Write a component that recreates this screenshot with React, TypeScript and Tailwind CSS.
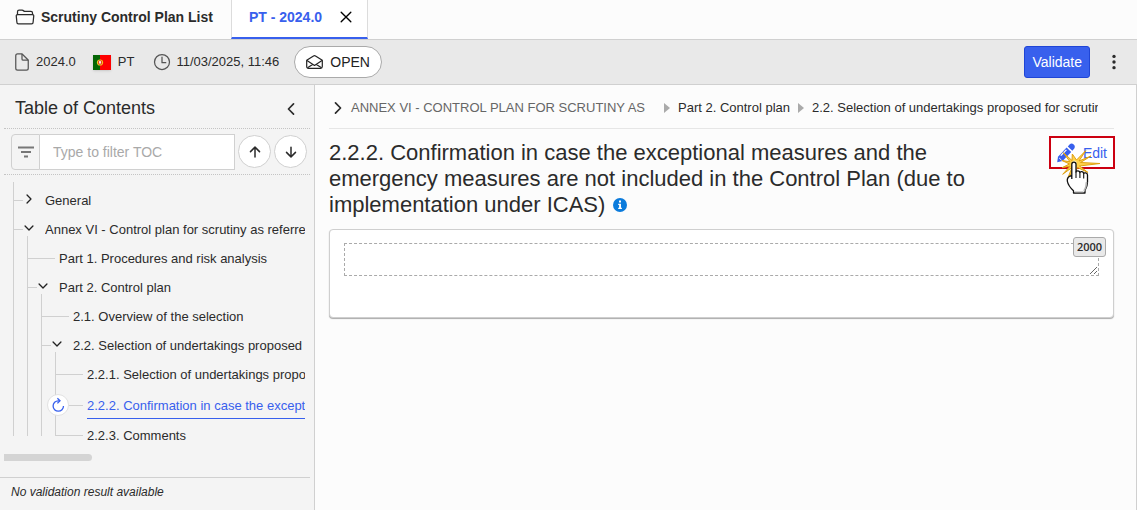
import React from "react";
import {
  IoArrowDown,
  IoArrowUp,
  IoChevronBack,
  IoChevronDown,
  IoChevronForward,
  IoCloseOutline,
  IoDocumentOutline,
  IoEllipsisVertical,
  IoFolderOpenOutline,
  IoTimeOutline,
} from "react-icons/io5";

type TocItem = {
  label: string;
  depth: number;
  state?: "open" | "closed";
  selected?: boolean;
};

const items: TocItem[] = [
  { label: "General", depth: 0, state: "closed" },
  { label: "Annex VI - Control plan for scrutiny as referre", depth: 0, state: "open" },
  { label: "Part 1. Procedures and risk analysis", depth: 1 },
  { label: "Part 2. Control plan", depth: 1, state: "open" },
  { label: "2.1. Overview of the selection", depth: 2 },
  { label: "2.2. Selection of undertakings proposed", depth: 2, state: "open" },
  { label: "2.2.1. Selection of undertakings propo", depth: 3 },
  { label: "2.2.2. Confirmation in case the except", depth: 3, selected: true },
  { label: "2.2.3. Comments", depth: 3 },
];

function ReloadIcon() {
  return (
    <svg viewBox="0 0 16 16" className="size-4" fill="none" stroke="currentColor" strokeWidth="1.3" aria-hidden="true">
      <path d="M9.800 3.800H8.300A5.200 5.200 0 1 0 13.500 9" />
      <path d="M7.400 1.300l2.600 2.500-2.600 2.600" />
    </svg>
  );
}

function OpenMailIcon() {
  return (
    <svg viewBox="0 0 17 14" className="h-[14px] w-[17px]" fill="none" stroke="currentColor" strokeWidth="1.2" strokeLinejoin="round" aria-hidden="true">
      <path d="M.7 5.300L7.500 1q1-.6 2 0l6.800 4.300v6.200q0 1.800-1.800 1.800h-12Q.7 13.300.7 11.500z" />
      <path d="M1 5.500l7.500 5 7.500-5M1.500 12.800L7 9.300M15.500 12.800L10 9.300" />
    </svg>
  );
}

function FlagPortugal() {
  return (
    <svg viewBox="0 0 18 15" className="h-[15px] w-[18px] shadow-sm" aria-hidden="true">
      <rect width="18" height="15" fill="#fe0000" />
      <rect width="7" height="15" fill="#056605" />
      <circle cx="7" cy="7.5" r="3.1" fill="#f0d020" />
      <rect x="5.200" y="5.400" width="3.600" height="4.200" rx="1" fill="#e02020" />
      <rect x="6.100" y="6.100" width="1.800" height="2.600" rx="0.6" fill="#fff" />
    </svg>
  );
}

function PencilIcon() {
  return (
    <svg viewBox="0 0 20 20" className="size-5" aria-hidden="true">
      <path d="M1.200 19.300l.8-5.500 8.600-9.200 4.600 4.500-8.600 8.900z" fill="#3860ed" />
      <path d="M11.800 3.400l2-2.200q2-1.400 3.900.4t.6 3.900l-2 2.300z" fill="#3860ed" />
      <path d="M4.800 12.600l5.600-5.700" stroke="#fff" strokeWidth="1.300" />
      <path d="M3.200 15l2.300 2.200" stroke="#fff" strokeWidth="1" />
    </svg>
  );
}

function ClickPointer() {
  return (
    <svg viewBox="0 0 42 46" className="pointer-events-none absolute top-[14px] left-[11px] h-[46px] w-[42px]" aria-hidden="true">
      <path
        d="M12 10.500L3.300 2.700l6.700 9.100-8-1.300 7.500 3.500L2 17.700l8-1.500-7.300 8.100 9.300-6.800-4.700 11.800 7.700-11.300 1 3 1.500-3.500 10.500 5-8.500-6.500 20.500-2.500-19.500-1L31 6l-12 5 6.700-10.300-9.200 9.300L12.300 4z"
        fill="#ffd24a"
        stroke="#dfa012"
        strokeWidth="1"
      />
      <circle cx="14.500" cy="12.800" r="2.200" fill="#fff3b8" />
      <path
        d="M11.800 29V14.200c0-2.900 4.200-2.900 4.200 0V22c.3-1.800 3.900-1.600 3.900.7.400-1.600 3.700-1.300 3.800.9.500-1.300 3.800-.8 3.800 1.400v7c0 4-1 6-2.500 8.500V43H13.500v-2.200C10.500 38 8 35 7.300 31c-.3-3 .7-4.700 4.500-5.600"
        fill="#fff"
        stroke="#111"
        strokeWidth="1.300"
        strokeLinejoin="round"
      />
      <path d="M16 21.500V28M19.900 22.500V28M23.700 23.500V28.500" stroke="#111" strokeWidth="1.100" />
      <path d="M24 41c1.600-2.500 2.400-4.500 2.500-9" stroke="#b5b5b5" strokeWidth="1.600" fill="none" />
      <path d="M14.500 41.800h9" stroke="#c9c9c9" strokeWidth="1.200" />
    </svg>
  );
}

function TocRow({ item, last }: { item: TocItem; last: boolean }) {
  const line = "border-l border-[#d0d0d0]";
  const guide = last ? "h-1/2 self-start" : "self-stretch";
  return (
    <li className={item.selected ? "relative flex h-8 items-center" : "relative flex h-[29px] items-center"}>
      {Array.from({ length: item.depth }, (_, i) => (
        <span key={i} className={`${line} ${guide} w-[14px] shrink-0`} />
      ))}
      <span className={`${line} ${guide} w-[14px] shrink-0`}>
        <span className={`flex flex-col justify-center ${last ? "h-[200%]" : "h-full"}`}>
          <span className={`h-px bg-[#d0d0d0] ${item.state ? "w-[9px]" : "w-full"}`} />
        </span>
      </span>
      <span className="flex w-[14px] shrink-0 flex-col justify-center self-stretch">
        {item.state ? (
          <button type="button" aria-label={`Toggle ${item.label}`} className="-ml-[5px] flex h-full items-center pb-1 text-[#222]">
            {item.state === "open" ? <IoChevronDown className="size-[14px]" /> : <IoChevronForward className="size-[14px]" />}
          </button>
        ) : (
          <span className="h-px bg-[#d0d0d0]" />
        )}
        {item.state === "open" && <span className={`${line} -mt-2 h-2 shrink-0`} />}
      </span>
      {item.selected && (
        <span className="absolute left-[34px] flex size-[22px] items-center justify-center rounded-full border border-[#e2e2e2] bg-white text-[#3860ed]">
          <ReloadIcon />
        </span>
      )}
      <a
        href="#section"
        className={
          item.selected
            ? "ml-1 flex-1 overflow-hidden border-b border-[#3860ed] pt-1.5 pb-1 leading-4 whitespace-nowrap text-[#3860ed]"
            : "ml-1 flex-1 overflow-hidden leading-5 whitespace-nowrap"
        }
      >
        {item.label}
      </a>
    </li>
  );
}

function Sidebar() {
  return (
    <aside className="flex w-[315px] shrink-0 flex-col border-r border-[#d0d0d0] bg-[#f4f4f4]">
      <div className="mr-1 ml-1 flex h-11 items-center justify-between border-b border-dotted border-[#c4c4c4] pr-[10px] pl-[11px]">
        <h2 className="pt-0.5 text-lg">Table of Contents</h2>
        <button type="button" aria-label="Collapse table of contents" className="pt-1">
          <IoChevronBack className="size-[18px]" />
        </button>
      </div>
      <div className="mx-1 flex h-[46px] items-center border-b border-dotted border-[#c4c4c4] pr-[3px] pl-[7px]">
        <label htmlFor="toc-filter" aria-label="Filter" className="flex h-9 w-[29px] items-center justify-center rounded-l border border-[#d0d0d0]">
          <svg viewBox="0 0 16 12" className="h-3 w-4" stroke="#777" strokeWidth="1.800" aria-hidden="true">
            <path d="M0 1.500h16M3 6h10M6 10.500h4" />
          </svg>
        </label>
        <input
          id="toc-filter"
          type="text"
          placeholder="Type to filter TOC"
          className="h-9 min-w-0 flex-1 border border-l-0 border-[#d0d0d0] bg-white px-[13px] text-sm placeholder:text-[#a9a9a9]"
        />
        <button type="button" aria-label="Previous" className="ml-[3px] flex size-[33px] items-center justify-center rounded-full border border-[#d0d0d0] bg-white">
          <IoArrowUp className="size-4" />
        </button>
        <button type="button" aria-label="Next" className="ml-[3px] flex size-[33px] items-center justify-center rounded-full border border-[#d0d0d0] bg-white">
          <IoArrowDown className="size-4" />
        </button>
      </div>
      <nav aria-label="Table of contents" className="mt-[7px] pr-[9px] pl-[13px] text-[13px]">
        <div className="h-1 border-l border-[#d0d0d0]" />
        <ul>
          {items.map((item, i) => (
            <TocRow key={item.label} item={item} last={i === items.length - 1} />
          ))}
        </ul>
      </nav>
      <div className="mt-1 ml-1 h-[7px] w-[88px] rounded-r-full bg-[#d4d4d4]" />
      <div className="mt-4 mr-1 flex-1 border-t border-[#d0d0d0] px-[11px] pt-1.5 text-xs leading-4 italic">
        No validation result available
      </div>
    </aside>
  );
}

function Content() {
  return (
    <main className="min-w-0 flex-1 border-r border-[#d0d0d0] pr-[22px] pl-[14px]">
      <nav aria-label="Breadcrumb" className="flex h-11 items-center border-b border-[#e6e6e6] pt-0.5 pr-4 text-[13px] whitespace-nowrap">
        <IoChevronForward className="mr-1 size-[18px] shrink-0" />
        <a href="#annex" className="w-[305px] shrink-0 text-[#666]">
          ANNEX VI - CONTROL PLAN FOR SCRUTINY AS
        </a>
        <span className="mr-2 ml-2 border-y-[5px] border-l-[6px] border-y-transparent border-l-[#aaa]" />
        <a href="#part2">Part 2. Control plan</a>
        <span className="mr-2 ml-2 border-y-[5px] border-l-[6px] border-y-transparent border-l-[#aaa]" />
        <a href="#selection" className="min-w-0 flex-1 overflow-hidden">
          2.2. Selection of undertakings proposed for scrutin
        </a>
      </nav>
      <div className="flex items-start justify-between">
        <h1 className="mt-[11px] max-w-[640px] text-[22px] leading-[26px]">
          2.2.2. Confirmation in case the exceptional measures and the emergency measures are not included in the Control Plan
          (due to implementation under ICAS)
          <svg viewBox="0 0 14 14" className="ml-2 inline size-[14px] align-baseline" aria-label="Information">
            <circle cx="7" cy="7" r="7" fill="#0b7bdc" />
            <path d="M6 2.500h2v2H6zM5.200 5.700H8v4h.9V11H5.200V9.700h.9V7h-.9z" fill="#fff" />
          </svg>
        </h1>
        <div className="relative -mr-px mt-[7px]">
          <button type="button" className="flex h-[33px] w-[66px] items-center justify-between border-2 border-[#cc0011] bg-white pr-1.5 pl-[5px] text-sm text-[#3860ed]">
            <PencilIcon />
            Edit
          </button>
          <ClickPointer />
        </div>
      </div>
      <section className="relative mt-[11px] h-[89px] rounded border border-[#cfcfcf] bg-white px-[14px] pt-[13px] pb-10 shadow-[0_1px_1px_#aaa]">
        <textarea
          aria-label="Confirmation text"
          className="block h-[33px] w-full resize border border-dashed border-[#aaa] bg-white pr-1"
        />
        <span className="absolute top-[7px] right-[7px] flex h-5 w-[33px] items-center justify-center rounded-[3px] border border-[#aaa] bg-[#e9e9e9] font-['Open_Sans',sans-serif] text-[11px] font-semibold">
          2000
        </span>
      </section>
    </main>
  );
}

export default function App() {
  return (
    <div className="flex min-h-screen flex-col bg-[#fcfcfc] font-['Liberation_Sans',Arial,sans-serif] text-[#2b2b2b]">
      <header className="flex h-10 border-b border-[#d0d0d0] text-sm font-bold">
        <a href="#list" className="flex items-center pr-[18px] pb-[5px] pl-[15px]">
          <IoFolderOpenOutline className="mr-1.5 size-5" />
          Scrutiny Control Plan List
        </a>
        <div className="flex items-center border-x border-b-2 border-x-[#dcdcdc] border-b-[#3860ed] bg-white pr-[10px] pb-[3px] pl-[17px] text-[#3860ed]">
          <a href="#plan">PT - 2024.0</a>
          <button type="button" aria-label="Close tab" className="ml-[13px] text-black">
            <IoCloseOutline className="size-[22px]" />
          </button>
        </div>
      </header>
      <div className="flex h-[45px] items-center border-b border-[#d0d0d0] bg-[#e9e9e9] pr-[14px] pl-3 text-[13px]">
        <IoDocumentOutline className="mr-1 size-5 text-[#555]" />
        <span>2024.0</span>
        <span className="ml-[17px] flex items-center gap-[7px]">
          <FlagPortugal />
          PT
        </span>
        <IoTimeOutline className="mr-1 ml-[18px] size-5 text-[#555]" />
        <span>11/03/2025, 11:46</span>
        <button type="button" className="ml-[15px] flex h-8 items-center gap-[7px] rounded-full border border-[#aaa] bg-white px-[11px] text-sm text-[#222]">
          <OpenMailIcon />
          OPEN
        </button>
        <button type="button" className="ml-auto h-8 rounded-[3px] border border-[#1f45d6] bg-[#3860ed] px-[7px] text-sm text-white">
          Validate
        </button>
        <button type="button" aria-label="More actions" className="ml-[15px]">
          <IoEllipsisVertical className="size-[18px]" />
        </button>
      </div>
      <div className="flex flex-1">
        <Sidebar />
        <Content />
      </div>
    </div>
  );
}
